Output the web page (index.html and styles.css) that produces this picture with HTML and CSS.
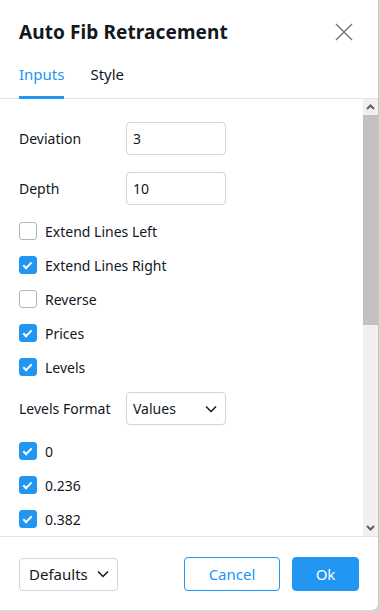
FILE: index.html
```html
<!DOCTYPE html>
<html lang="en">
<head>
    <meta charset="UTF-8">
    <meta name="viewport" content="width=device-width, initial-scale=1.0">
    <title>Auto Fib Retracement</title>
    <link rel="stylesheet" href="styles.css">
</head>
<body>
    <div class="dialog">
        <div class="header">
            <h1>Auto Fib Retracement</h1>
            <button class="close" aria-label="Close">
                <svg width="18" height="18" viewBox="0 0 18 18"><path d="M1 1l16 16M17 1L1 17" stroke="#787b86" stroke-width="1.5" fill="none"/></svg>
            </button>
        </div>
        <div class="tabs">
            <div class="tab active">Inputs</div>
            <div class="tab">Style</div>
        </div>

        <div class="body">
            <div class="content">
                <div class="field">
                    <label>Deviation</label>
                    <div class="input">3</div>
                </div>
                <div class="field last">
                    <label>Depth</label>
                    <div class="input">10</div>
                </div>
                <div class="check"><span class="box"></span>Extend Lines Left</div>
                <div class="check"><span class="box on"></span>Extend Lines Right</div>
                <div class="check"><span class="box"></span>Reverse</div>
                <div class="check"><span class="box on"></span>Prices</div>
                <div class="check"><span class="box on"></span>Levels</div>
                <div class="field format">
                    <label>Levels Format</label>
                    <div class="input select">Values
                        <svg width="12" height="8" viewBox="0 0 12 8"><path d="M1 1.5l5 5 5-5" stroke="#131722" stroke-width="1.5" fill="none"/></svg>
                    </div>
                </div>
                <div class="check"><span class="box on"></span>0</div>
                <div class="check"><span class="box on"></span>0.236</div>
                <div class="check"><span class="box on"></span>0.382</div>
            </div>
            <div class="scrollbar">
                <div class="arrow">
                    <svg width="9" height="6" viewBox="0 0 9 6"><path d="M1 5l3.5-3.5L8 5" stroke="#606060" stroke-width="2" fill="none"/></svg>
                </div>
                <div class="track"><div class="thumb"></div></div>
                <div class="arrow">
                    <svg width="9" height="6" viewBox="0 0 9 6"><path d="M1 1l3.5 3.5L8 1" stroke="#606060" stroke-width="2" fill="none"/></svg>
                </div>
            </div>
        </div>

        <div class="footer">
            <div class="defaults">Defaults
                <svg width="12" height="8" viewBox="0 0 12 8"><path d="M1 1.5l5 5 5-5" stroke="#131722" stroke-width="1.5" fill="none"/></svg>
            </div>
            <div class="buttons">
                <button class="btn cancel">Cancel</button>
                <button class="btn ok">Ok</button>
            </div>
        </div>
    </div>
</body>
</html>
```

FILE: styles.css
```css
body {
    margin: 0;
    background: #d6d6d6;
    font-family: "Noto Sans", "Open Sans", sans-serif;
    color: #131722;
}

.dialog {
    width: 378px;
    height: 610px;
    background: #fff;
    border-bottom-right-radius: 6px;
    box-shadow: 1px 1px 0 #c8c8c8;
    display: flex;
    flex-direction: column;
    overflow: hidden;
}

.header {
    display: flex;
    align-items: center;
    justify-content: space-between;
    padding: 18px 25px 0 19px;
    height: 28px;
}

h1 {
    margin: 0;
    font-size: 19px;
    font-weight: 700;
    letter-spacing: 0.1px;
}

.close {
    background: none;
    border: none;
    padding: 0;
    width: 18px;
    height: 18px;
}

.tabs {
    display: flex;
    gap: 26px;
    padding: 0 19px;
    margin-top: 18px;
    border-bottom: 1px solid #e0e3eb;
}

.tab {
    font-size: 15px;
    padding-bottom: 12px;
    border-bottom: 3px solid transparent;
    margin-bottom: -1px;
}

.tab.active {
    color: #2196f3;
    border-color: #2196f3;
}

.body {
    display: flex;
    height: 437px;
    border-bottom: 1px solid #e0e3eb;
}

.content {
    flex: 1;
    padding: 23px 19px 0;
    overflow: hidden;
}

.field {
    display: flex;
    align-items: center;
    height: 33px;
    margin-bottom: 17px;
}

.field.last {
    margin-bottom: 9px;
}

.field label {
    width: 107px;
    font-size: 14px;
}

.field.format {
    margin-top: 8px;
    margin-bottom: 9px;
}

.input {
    width: 86px;
    height: 31px;
    border: 1px solid #d1d4dc;
    border-radius: 4px;
    padding: 0 6px;
    font-size: 14px;
    display: flex;
    align-items: center;
}

.select {
    justify-content: space-between;
    padding-right: 8px;
    width: 84px;
}

.check {
    display: flex;
    align-items: center;
    height: 34px;
    font-size: 14px;
}

.box {
    width: 16px;
    height: 16px;
    border: 1px solid #b2b5be;
    border-radius: 3px;
    margin-right: 8px;
    box-sizing: content-box;
    display: inline-block;
    position: relative;
}

.box.on {
    background: #2196f3;
    border-color: #2196f3;
}

.box.on::after {
    content: "";
    position: absolute;
    left: 5px;
    top: 3px;
    width: 3px;
    height: 7px;
    border: solid #fff;
    border-width: 0 2px 2px 0;
    transform: rotate(45deg);
}

.scrollbar {
    width: 15px;
    background: #f0f0f0;
    display: flex;
    flex-direction: column;
}

.arrow {
    height: 16px;
    display: flex;
    align-items: center;
    justify-content: center;
}

.track {
    flex: 1;
}

.thumb {
    height: 210px;
    background: #c1c1c1;
}

.footer {
    display: flex;
    justify-content: space-between;
    align-items: center;
    padding: 20px 19px 0;
}

.defaults {
    width: 99px;
    height: 33px;
    box-sizing: border-box;
    border: 1px solid #d1d4dc;
    border-radius: 4px;
    padding: 0 8px 0 9px;
    font-size: 15px;
    display: flex;
    align-items: center;
    justify-content: space-between;
}

.buttons {
    display: flex;
    gap: 12px;
}

.btn {
    height: 34px;
    border-radius: 4px;
    font-family: inherit;
    font-size: 15px;
    border: 1px solid #2196f3;
}

.cancel {
    width: 96px;
    background: #fff;
    color: #2196f3;
}

.ok {
    width: 67px;
    background: #2196f3;
    color: #fff;
}
```
